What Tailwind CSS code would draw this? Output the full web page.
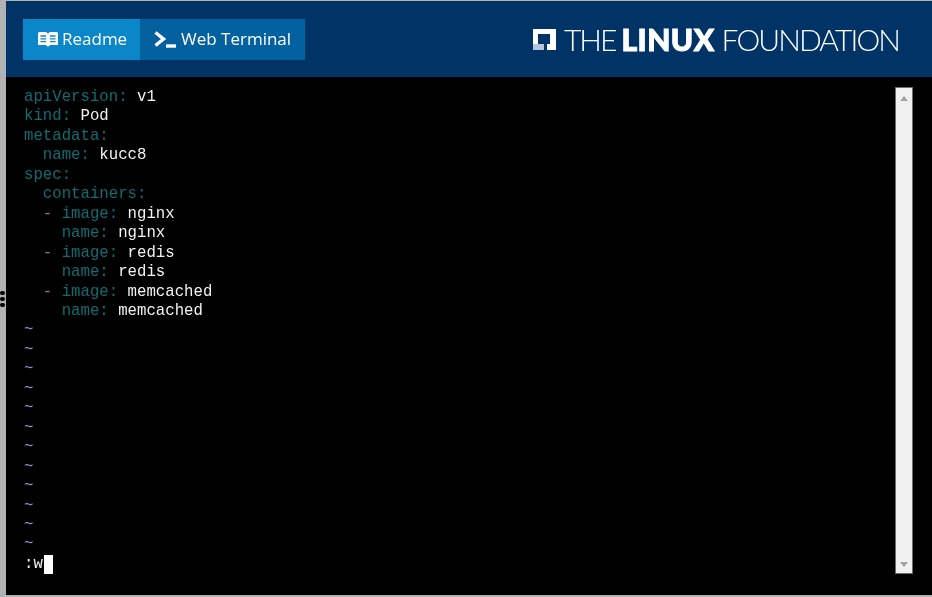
<!DOCTYPE html>
<html lang="en">
<head>
  <meta charset="UTF-8" />
  <title>Web Terminal</title>
  <script src="https://cdn.jsdelivr.net/npm/@tailwindcss/browser@4"></script>
</head>
<body class="bg-[#b0b2b4] overflow-hidden">
  <div class="w-[932px] h-[597px] flex flex-col pt-px pb-[2px] pl-[6px] relative">
    <span class="absolute left-0 top-[291px] flex flex-col gap-[2px] blur-[0.4px]">
      <i class="block w-[5px] h-[4px] rounded-full bg-black"></i>
      <i class="block w-[5px] h-[4px] rounded-full bg-black"></i>
      <i class="block w-[5px] h-[4px] rounded-full bg-black"></i>
    </span>

    <header class="h-[76px] shrink-0 bg-[#003366] flex items-center justify-between pl-[17px] pr-[33px]">
      <nav class="flex h-[41px] text-white text-[17px] font-['Open_Sans',sans-serif]">
        <a class="w-[117px] bg-[#0a86c9] flex items-center pl-[14px] gap-[3px]">
          <svg class="blur-[0.3px]" width="22" height="15" viewBox="0 0 22 15" fill="#fff"><path d="M1 1.500C1 .5 2 0 3 0h5c1.300 0 2.300.6 3 1.500C11.700.6 12.700 0 14 0h5c1 0 2 .5 2 1.500V13h-7c-1.300 0-2.300.7-3 2-.7-1.300-1.700-2-3-2H1z"/><path d="M3.500 4H9M3.500 6.800H9M3.500 9.600H9M13 4h5.500M13 6.800h5.500M13 9.600h5.500" stroke="#0a86c9" stroke-width="1.300"/></svg>
          <span class="blur-[0.3px]">Readme</span>
        </a>
        <a class="w-[165px] bg-[#04619f] flex items-center pl-[14px] gap-[5px]">
          <svg class="blur-[0.3px]" width="22" height="17" viewBox="0 0 22 17" fill="none" stroke="#fff" stroke-width="3.400"><path d="M1.500 1.500 9.500 8l-8 6.500"/><path d="M12 15h10"/></svg>
          <span class="blur-[0.3px]">Web Terminal</span>
        </a>
      </nav>
      <div class="flex items-center text-white text-[30px] leading-none font-['Lato',sans-serif] blur-[0.3px]">
        <svg class="mr-[8px]" width="23" height="21" viewBox="0 0 23 21"><path d="M0 0h23v21H0z" fill="#fff"/><path d="M0 15h11v6H0z" fill="#b4c6dc"/><path d="M5 5h12v10H5zM11 15h3v6h-3z" fill="#003366"/></svg>
        <span class="font-light tracking-[-2px]">THE</span>
        <span class="font-black ml-[6px] tracking-[0.5px] [-webkit-text-stroke:1px_white]">LINUX</span>
        <span class="font-light ml-[7px] tracking-[-1.9px]">FOUNDATION</span>
      </div>
    </header>

    <main class="flex-1 bg-black flex justify-between pl-[18px] pr-[19px] pt-[10px] pb-[21px] min-h-0">
      <div class="pt-px text-[15.7px] leading-[19.46px] [&>div]:whitespace-pre text-[#f2f2f2] font-['Liberation_Mono',monospace] blur-[0.4px]">
        <div><span class="text-[#0e6d73]">apiVersion:</span> v1</div>
        <div><span class="text-[#0e6d73]">kind:</span> Pod</div>
        <div class="text-[#0e6d73]">metadata:</div>
        <div>  <span class="text-[#0e6d73]">name:</span> kucc8</div>
        <div class="text-[#0e6d73]">spec:</div>
        <div class="text-[#0e6d73]">  containers:</div>
        <div>  <span class="text-[#b5772a]">-</span> <span class="text-[#0e6d73]">image:</span> nginx</div>
        <div>    <span class="text-[#0e6d73]">name:</span> nginx</div>
        <div>  <span class="text-[#b5772a]">-</span> <span class="text-[#0e6d73]">image:</span> redis</div>
        <div>    <span class="text-[#0e6d73]">name:</span> redis</div>
        <div>  <span class="text-[#b5772a]">-</span> <span class="text-[#0e6d73]">image:</span> memcached</div>
        <div>    <span class="text-[#0e6d73]">name:</span> memcached</div>
        <div class="text-[#7f9fd0]">~</div>
        <div class="text-[#7f9fd0]">~</div>
        <div class="text-[#7f9fd0]">~</div>
        <div class="text-[#7f9fd0]">~</div>
        <div class="text-[#7f9fd0]">~</div>
        <div class="text-[#7f9fd0]">~</div>
        <div class="text-[#7f9fd0]">~</div>
        <div class="text-[#7f9fd0]">~</div>
        <div class="text-[#7f9fd0]">~</div>
        <div class="text-[#7f9fd0]">~</div>
        <div class="text-[#7f9fd0]">~</div>
        <div class="text-[#7f9fd0]">~</div>
        <div class="flex items-start"><span>:w</span><span class="w-[9px] h-[19px] bg-white ml-[1px]"></span></div>
      </div>
      <aside class="w-[18px] bg-[#f0f0f0] border border-[#6e6e6e] flex flex-col justify-between items-center pt-[8px] pb-[6px]">
        <svg width="8" height="5" viewBox="0 0 8 5" fill="#a3a3a3"><path d="M4 0l4 5H0z"/></svg>
        <svg width="8" height="5" viewBox="0 0 8 5" fill="#a3a3a3"><path d="M4 5l4-5H0z"/></svg>
      </aside>
    </main>
  </div>
</body>
</html>
